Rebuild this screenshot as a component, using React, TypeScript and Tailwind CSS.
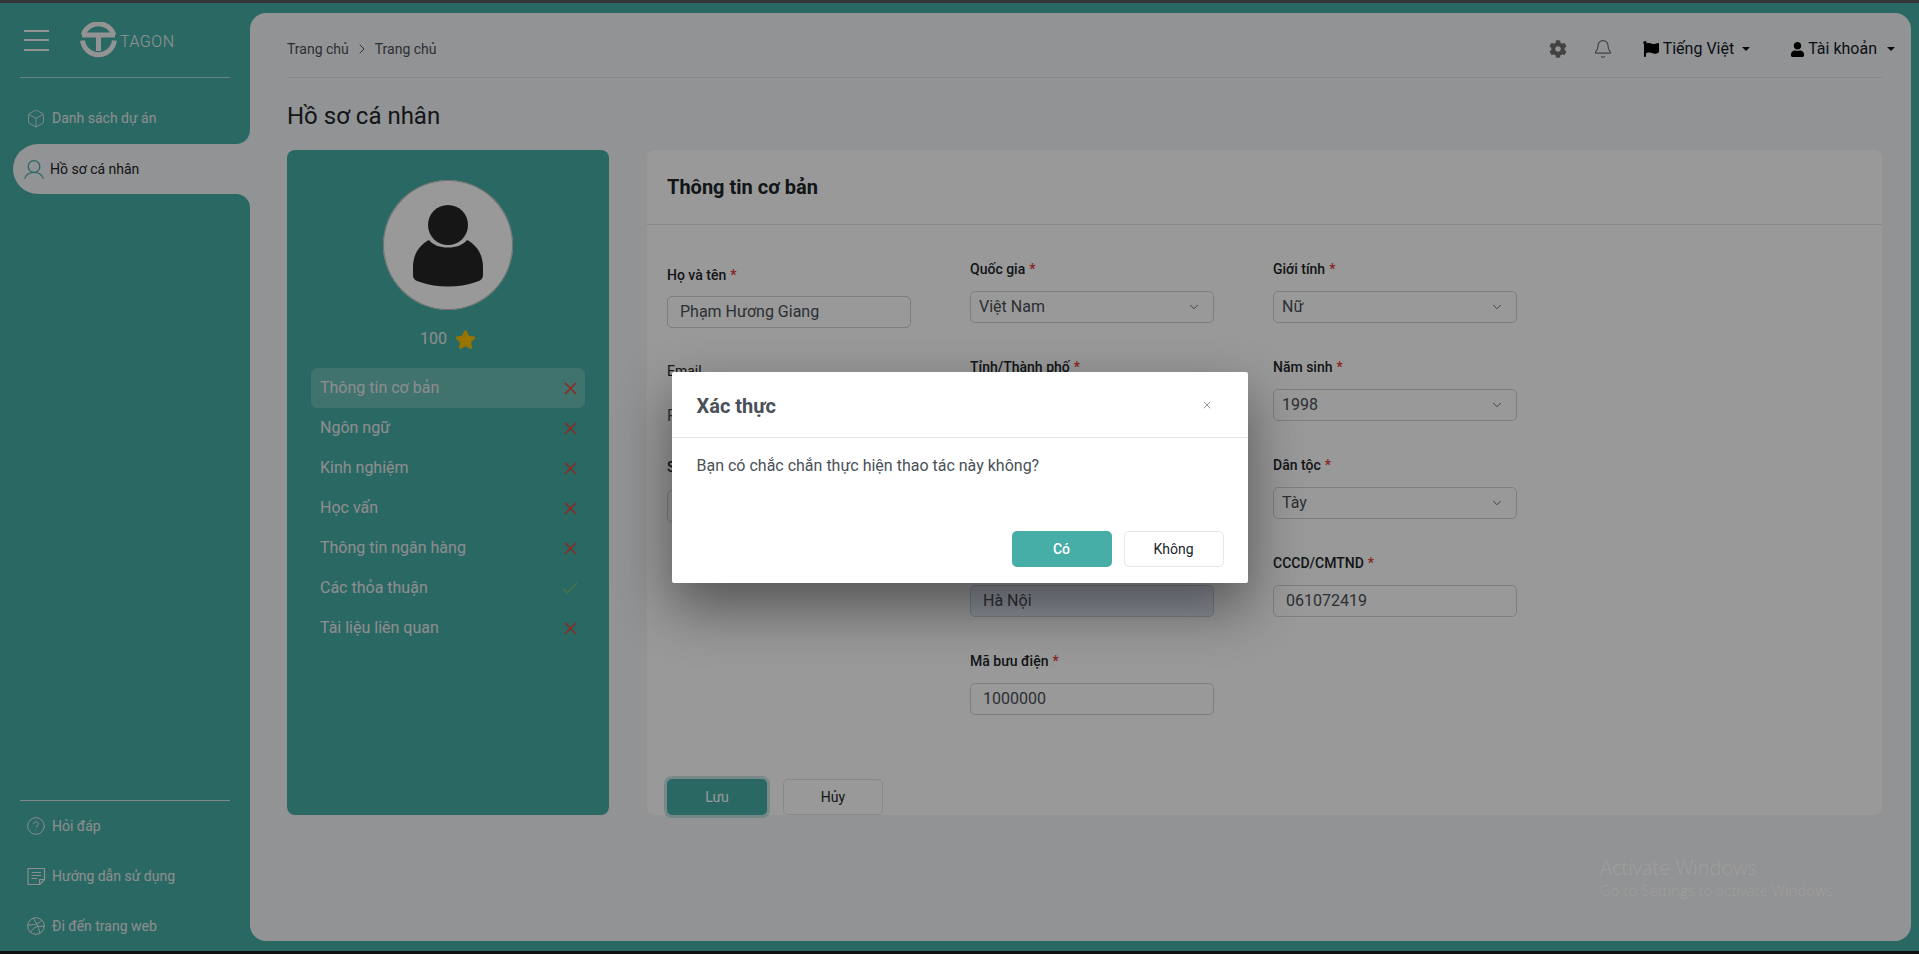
import type { ReactNode } from 'react';
import { Box, ChevronDown, ChevronRight, CircleHelp, Bell, X } from 'lucide-react';
import { FaCog, FaFlag, FaUser, FaStar } from 'react-icons/fa';
import { FiDribbble } from 'react-icons/fi';

const font = 'font-["Roboto","Liberation_Sans",sans-serif]';

const Logo = () => (
  <div className="flex items-center gap-[3px]">
    <svg width="37" height="37" viewBox="0 0 37 37" fill="none" stroke="#f5f5f5">
      <path d="M3.2 13 A16 16 0 0 1 33.8 13" strokeWidth="5" />
      <path d="M2.6 18.5 A16 16 0 0 0 34.4 18.5" strokeWidth="5" />
      <path d="M2 13 H35 M18.5 13 V29" strokeWidth="5" />
    </svg>
    <span className="mt-[4px] text-[16px] leading-none font-light tracking-[0.5px] text-[#f5f5f5]">TAGON</span>
  </div>
);

const GuideIcon = () => (
  <svg width="19" height="19" viewBox="0 0 19 19" fill="none" stroke="currentColor" strokeWidth="1.2">
    <path d="M1 1.5 H17.5 V12.5 L12.5 17.5 H1 Z" strokeLinejoin="round" />
    <path d="M4.5 5.5 H14 M4.5 8.5 H14 M4.5 11.5 H10 M12.5 17.5 V12.5 H17.5" />
  </svg>
);

const UserOutline = () => (
  <svg width="20" height="19" viewBox="0 0 20 19" fill="none" stroke="#46aea7" strokeWidth="1.3">
    <circle cx="10" cy="6.5" r="5.8" />
    <path d="M0.7 18.5 C2 14.5 5.5 12.3 10 12.3 C14.5 12.3 18 14.5 19.3 18.5" />
  </svg>
);

const SideLink = ({ icon, label }: { icon: ReactNode; label: string }) => (
  <div className="flex h-[50px] items-center gap-[6px] pl-[26px] text-[14px] text-[#ececec]">
    <span className="flex w-[20px] justify-center">{icon}</span>
    <span>{label}</span>
  </div>
);

const Sidebar = () => (
  <aside className="flex h-full w-[250px] shrink-0 flex-col text-[#ececec]">
    <div className="bg-[#f4f5f7]">
      <div className="h-[131px] rounded-br-[14px] bg-[#46aea7]">
        <div className="mx-[20px] flex h-[65px] items-center gap-[31px] border-b border-[#f5f5f5]/60 pb-[10px] pl-[4px]">
          <div className="flex w-[25px] flex-col gap-[7.5px]">
            <span className="h-[2px] bg-[#f5f5f5]" />
            <span className="h-[2px] bg-[#f5f5f5]" />
            <span className="h-[2px] bg-[#f5f5f5]" />
          </div>
          <Logo />
        </div>
        <div className="pt-[15px]">
          <SideLink icon={<Box size={23} strokeWidth={1} />} label="Danh sách dự án" />
        </div>
      </div>
    </div>
    <div className="ml-[13px] flex h-[50px] items-center gap-[6px] rounded-l-[25px] bg-[#f4f5f7] pl-[11px] text-[14px] text-[#222]">
      <UserOutline />
      <span>Hồ sơ cá nhân</span>
    </div>
    <div className="flex-1 bg-[#f4f5f7]">
      <div className="flex h-full flex-col justify-end rounded-tr-[14px] bg-[#46aea7]">
        <div className="-mb-[10px]">
          <div className="mx-[20px] border-t border-[#f5f5f5]/80" />
          <SideLink icon={<CircleHelp size={22} strokeWidth={1.1} />} label="Hỏi đáp" />
          <SideLink icon={<GuideIcon />} label="Hướng dẫn sử dụng" />
          <SideLink icon={<FiDribbble size={20} strokeWidth={1.2} />} label="Đi đến trang web" />
        </div>
      </div>
    </div>
  </aside>
);

const Topbar = () => (
  <header className="flex h-[65px] items-center justify-between border-b border-[#dfe1e4] pt-[8px] text-[#111827]">
    <div className="flex items-center gap-[5px] text-[14px] text-[#495057]">
      <span>Trang chủ</span>
      <ChevronRight size={16} strokeWidth={1.5} />
      <span>Trang chủ</span>
    </div>
    <div className="flex items-center text-[16px]">
      <FaCog size={18} className="mr-[26px] text-[#6f6f6f]" />
      <Bell size={20} strokeWidth={1.4} className="mr-[30px] text-[#6f6f6f]" />
      <FaFlag size={16} className="mr-[4px] text-black" />
      <span>Tiếng Việt</span>
      <span className="ml-[8px] mr-[40px] border-x-[4.5px] border-t-[4.5px] border-x-transparent border-t-[#111]" />
      <FaUser size={15} className="mr-[3px] text-black" />
      <span>Tài khoản</span>
      <span className="ml-[10px] mr-[-13px] border-x-[4.5px] border-t-[4.5px] border-x-transparent border-t-[#111]" />
    </div>
  </header>
);

const Mark = ({ done }: { done?: boolean }) =>
  done ? (
    <svg width="16" height="12" viewBox="0 0 16 12" fill="none" stroke="#7cc576" strokeWidth="1.2">
      <path d="M1 6.5 L5.5 11 L15 1" />
    </svg>
  ) : (
    <svg width="13" height="13" viewBox="0 0 13 13" fill="none" stroke="#ee4238" strokeWidth="1.5">
      <path d="M1 1 L12 12 M12 1 L1 12" />
    </svg>
  );

const steps = [
  { name: 'Thông tin cơ bản', active: true },
  { name: 'Ngôn ngữ' },
  { name: 'Kinh nghiệm' },
  { name: 'Học vấn' },
  { name: 'Thông tin ngân hàng' },
  { name: 'Các thỏa thuận', done: true },
  { name: 'Tài liệu liên quan' },
];

const ProfileCard = () => (
  <div className="flex w-[322px] shrink-0 flex-col items-center rounded-[8px] bg-[#46aea7] pt-[30px] text-[#ececec]">
    <div className="flex h-[130px] w-[130px] items-center justify-center rounded-full bg-white pt-[1px] ring-1 ring-inset ring-[#bdbdbd]">
      <svg width="70" height="82" viewBox="0 0 70 82" fill="#262626">
        <circle cx="35" cy="20" r="20" />
        <path d="M16 35 C23 45 47 45 54 35 C64 40 70 50 70 62 V70 C70 74 67 76 63 77 C46 83 24 83 7 77 C3 76 0 74 0 70 V62 C0 50 6 40 16 35 Z" />
      </svg>
    </div>
    <div className="mt-[17px] flex h-[24px] items-center gap-[8px] text-[16px]">
      <span>100</span>
      <FaStar size={21} className="text-[#ffc400]" />
    </div>
    <ul className="mt-[17px] flex w-[274px] flex-col">
      {steps.map((s) => (
        <li
          key={s.name}
          className={`flex h-[40px] items-center justify-between rounded-[6px] pl-[9px] pr-[7px] text-[16px] ${s.active ? 'bg-white/20' : ''}`}
        >
          <span>{s.name}</span>
          <span className="flex w-[16px] justify-center">
            <Mark done={s.done} />
          </span>
        </li>
      ))}
    </ul>
  </div>
);

const Label = ({ text }: { text?: string }) => (
  <div className="flex h-[21px] items-center pt-[2px] text-[14px] font-medium text-[#212529]">
    {text}
    {text && <span className="ml-[4px] text-[#e53935]">*</span>}
  </div>
);

const Input = ({ value, tinted }: { value?: string; tinted?: boolean }) => (
  <div
    className={`flex h-[32px] items-center rounded-[5px] border border-[#ced4da] px-[12px] text-[16px] text-[#495057] ${tinted ? 'bg-[#e8f0fe] text-[#212529]' : 'bg-white'}`}
  >
    {value}
  </div>
);

const Select = ({ value }: { value?: string }) => (
  <div className="flex h-[32px] items-center justify-between rounded-[5px] border border-[#ced4da] bg-white pl-[8px] pr-[12px] text-[16px] text-[#495057]">
    <span>{value}</span>
    <ChevronDown size={14} strokeWidth={1.4} />
  </div>
);

const Field = ({ label, children }: { label?: string; children: ReactNode }) => (
  <div className="mb-[33px] flex flex-col gap-[12px]">
    <Label text={label} />
    {children}
  </div>
);

const BasicInfo = () => (
  <div className="flex min-w-0 flex-1 flex-col rounded-[8px] bg-white">
    <div className="flex h-[75px] items-center border-b border-[#e3e5e8] px-[20px] text-[20px] font-bold text-[#212529]">
      Thông tin cơ bản
    </div>
    <div className="flex flex-1 flex-col justify-between pl-[20px] pt-[33px]">
      <div className="flex gap-[59px]">
        <div className="mt-[6px] w-[244px]">
          <div className="mb-[33px] flex flex-col gap-[11px]">
            <Label text="Họ và tên" />
            <Input value="Phạm Hương Giang" />
          </div>
          <div className="mb-[25px] flex flex-col gap-[19px]">
            <div className="flex h-[20px] items-center text-[14px] text-[#212529]">Email</div>
            <div className="flex h-[32px] items-center whitespace-nowrap text-[16px] text-[#495057]">P</div>
          </div>
          <div className="flex flex-col gap-[13px]">
            <div className="flex h-[20px] items-center text-[14px] font-medium text-[#212529]">S</div>
            <Input />
          </div>
        </div>
        <div className="w-[244px]">
          <Field label="Quốc gia">
            <Select value="Việt Nam" />
          </Field>
          <Field label="Tỉnh/Thành phố">
            <Select />
          </Field>
          <Field>
            <Select />
          </Field>
          <Field>
            <Input value="Hà Nội" tinted />
          </Field>
          <Field label="Mã bưu điện">
            <Input value="1000000" />
          </Field>
        </div>
        <div className="w-[244px]">
          <Field label="Giới tính">
            <Select value="Nữ" />
          </Field>
          <Field label="Năm sinh">
            <Select value="1998" />
          </Field>
          <Field label="Dân tộc">
            <Select value="Tày" />
          </Field>
          <Field label="CCCD/CMTND">
            <Input value="061072419" />
          </Field>
        </div>
      </div>
      <div className="flex gap-[16px]">
        <button className="h-[36px] w-[100px] rounded-[5px] bg-[#46aea7] text-[14px] text-white ring-[3px] ring-[#46aea7]/30">
          Lưu
        </button>
        <button className="h-[36px] w-[100px] rounded-[5px] border border-[#e3e5e8] bg-white text-[14px] text-[#212529]">
          Hủy
        </button>
      </div>
    </div>
  </div>
);

const ConfirmModal = () => (
  <div className="absolute inset-0 flex justify-center bg-black/40 pt-[369px]">
    <div className="h-[211px] w-[576px] rounded-[2px] bg-white shadow-[0_24px_56px_rgba(0,0,0,0.45)]">
      <div className="flex h-[66px] items-center justify-between border-b border-[#e3e6ea] pl-[25px] pr-[35px]">
        <span className="pt-[2px] text-[20px] font-bold text-[#495057]">Xác thực</span>
        <X size={12} strokeWidth={1.5} className="text-[#6c757d]" />
      </div>
      <div className="h-[93px] pl-[25px] pt-[18px] text-[16px] leading-[20px] text-[#495057]">
        Bạn có chắc chắn thực hiện thao tác này không?
      </div>
      <div className="flex justify-end gap-[12px] pr-[24px]">
        <button className="h-[36px] w-[100px] rounded-[5px] bg-[#46aea7] text-[14px] font-medium text-white">Có</button>
        <button className="h-[36px] w-[100px] rounded-[5px] border border-[#e3e6ea] bg-white text-[14px] text-[#212529]">
          Không
        </button>
      </div>
    </div>
  </div>
);

export default function App() {
  return (
    <div className={`relative flex h-screen flex-col overflow-hidden bg-[#111] ${font}`}>
      <div className="h-[3px] shrink-0 bg-[#33373a]" />
      <div className="relative flex min-h-0 flex-1 bg-[#46aea7] pr-[8px]">
        <div className="flex w-full py-[10px]">
          <Sidebar />
          <main className="flex min-w-0 flex-1 flex-col rounded-[16px] bg-[#f4f5f7] pl-[37px] pr-[29px]">
            <Topbar />
            <h1 className="flex h-[72px] items-center pt-[4px] text-[24px] text-[#212529]">Hồ sơ cá nhân</h1>
            <div className="flex h-[665px] gap-[38px]">
              <ProfileCard />
              <BasicInfo />
            </div>
          </main>
        </div>
        <ConfirmModal />
      </div>
      <div className="h-[3px] shrink-0" />
      <div className='absolute left-[1600px] top-[856px] font-["Open_Sans",sans-serif] font-light text-[#9f9f9f]'>
        <div className="text-[20px] leading-[24px]">Activate Windows</div>
        <div className="text-[15px] leading-[20px]">Go to Settings to activate Windows.</div>
      </div>
    </div>
  );
}
